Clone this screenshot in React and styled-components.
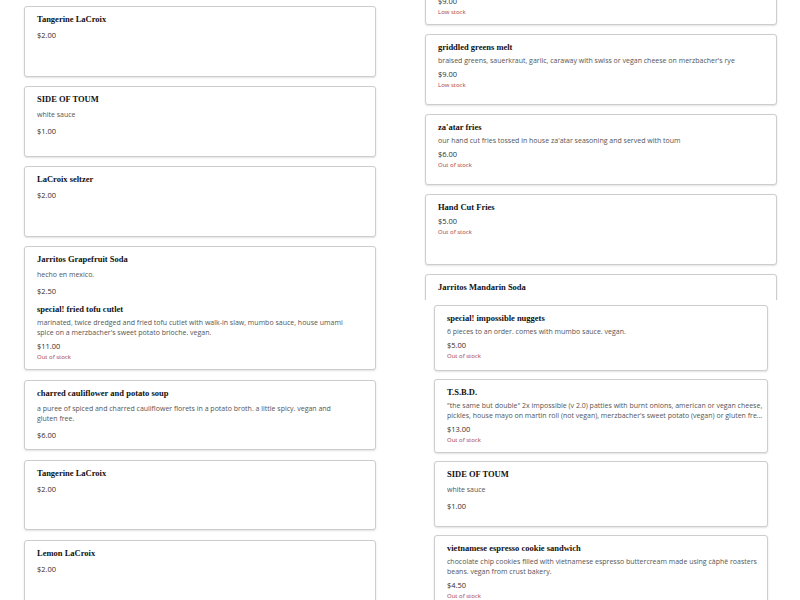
import React from "react";
import styled, { createGlobalStyle } from "styled-components";

const GlobalStyle = createGlobalStyle`
    html, body {
        margin: 0;
        padding: 0;
        background: #ffffff;
    }
    * {
        box-sizing: border-box;
    }
`;

const topLeft = [
    { name: "Tangerine LaCroix", price: "$2.00" },
    { name: "SIDE OF TOUM", desc: "white sauce", price: "$1.00" },
    { name: "LaCroix seltzer", price: "$2.00" },
    { name: "Jarritos Grapefruit Soda", desc: "hecho en mexico.", price: "$2.50" },
];

const topRight = [
    {
        name: "the reuben melt",
        desc: "smoked tofu, sauerkraut, russian dressing with swiss or vegan cheese on merzbacher's rye, served warm with pickles",
        price: "$9.00",
        stock: "Low stock",
    },
    {
        name: "griddled greens melt",
        desc: "braised greens, sauerkraut, garlic, caraway with swiss or vegan cheese on merzbacher's rye",
        price: "$9.00",
        stock: "Low stock",
    },
    {
        name: "za'atar fries",
        desc: "our hand cut fries tossed in house za'atar seasoning and served with toum",
        price: "$6.00",
        stock: "Out of stock",
    },
    { name: "Hand Cut Fries", price: "$5.00", stock: "Out of stock" },
    { name: "Jarritos Mandarin Soda", desc: "hecho en mexico.", price: "$2.50" },
];

const bottomLeft = [
    {
        name: "special! fried tofu cutlet",
        desc: "marinated, twice dredged and fried tofu cutlet with walk-in slaw, mumbo sauce, house umami spice on a merzbacher's sweet potato brioche. vegan.",
        price: "$11.00",
        stock: "Out of stock",
    },
    {
        name: "charred cauliflower and potato soup",
        desc: "a puree of spiced and charred cauliflower florets in a potato broth. a little spicy. vegan and gluten free.",
        price: "$6.00",
    },
    { name: "Tangerine LaCroix", price: "$2.00" },
    { name: "Lemon LaCroix", price: "$2.00" },
];

const bottomRight = [
    {
        name: "special! impossible nuggets",
        desc: "6 pieces to an order. comes with mumbo sauce. vegan.",
        price: "$5.00",
        stock: "Out of stock",
    },
    {
        name: "T.S.B.D.",
        desc: "\"the same but double\" 2x impossible (v 2.0) patties with burnt onions, american or vegan cheese, pickles, house mayo on martin roll (not vegan), merzbacher's sweet potato (vegan) or gluten free bun.",
        price: "$13.00",
        stock: "Out of stock",
    },
    { name: "SIDE OF TOUM", desc: "white sauce", price: "$1.00" },
    {
        name: "vietnamese espresso cookie sandwich",
        desc: "chocolate chip cookies filled with vietnamese espresso buttercream made using càphê roasters beans. vegan from crust bakery.",
        price: "$4.50",
        stock: "Out of stock",
    },
];

const Page = styled.div`
    width: 800px;
    height: 600px;
    overflow: hidden;
    display: flex;
    flex-direction: column;
    background: #ffffff;
`;

const Panel = styled.section`
    height: 300px;
    flex: none;
    overflow: hidden;
    display: grid;
    grid-template-columns: ${p => p.$cols};
    column-gap: ${p => p.$gap}px;
    align-items: start;
    padding-left: 24px;
`;

// columns are scrolled, so each one starts at its own offset
const Column = styled.div`
    display: flex;
    flex-direction: column;
    gap: ${p => p.$gap}px;
    margin-top: ${p => p.$shift}px;
`;

const Card = styled.div`
    background: #ffffff;
    border: 1px solid #cdcdcd;
    border-radius: 3px;
    box-shadow: 0 1px 2px rgba(0, 0, 0, 0.12);
    min-height: ${p => p.$min}px;
    padding: 7px ${p => p.$padRight}px 7px 12px;
    display: flex;
    flex-direction: column;
`;

const Title = styled.div`
    font-family: "Liberation Serif", "Times New Roman", serif;
    font-weight: 700;
    font-size: 8.5px;
    line-height: 11px;
    color: #111111;
    margin-bottom: ${p => (p.$tight ? 3 : 5)}px;
`;

const Desc = styled.div`
    font-family: "Open Sans", "Noto Sans", sans-serif;
    font-size: 7px;
    line-height: 10px;
    color: #555555;
    margin-bottom: ${p => (p.$tight ? 3 : 6)}px;
    display: -webkit-box;
    -webkit-line-clamp: 2;
    -webkit-box-orient: vertical;
    overflow: hidden;
`;

const Price = styled.div`
    font-family: "Open Sans", "Noto Sans", sans-serif;
    font-size: 7.5px;
    line-height: 11px;
    color: #2e2e2e;
`;

const Stock = styled.div`
    font-family: "Open Sans", "Noto Sans", sans-serif;
    font-size: 6px;
    line-height: 10px;
    color: #a63a40;
`;

const MenuCard = ({ item, min, padRight }) => {
    const tight = Boolean(item.stock);
    return (
        <Card $min={min} $padRight={padRight}>
            <Title $tight={tight}>{item.name}</Title>
            {item.desc && <Desc $tight={tight}>{item.desc}</Desc>}
            <Price>{item.price}</Price>
            {item.stock && <Stock>{item.stock}</Stock>}
        </Card>
    );
};

const MenuColumn = ({ items, shift, gap, min, padRight = 12 }) => (
    <Column $shift={shift} $gap={gap}>
        {items.map((item, i) => (
            <MenuCard key={i} item={item} min={min} padRight={padRight} />
        ))}
    </Column>
);

export default function App() {
    return (
        <>
            <GlobalStyle />
            <Page>
                <Panel $cols="352px 352px" $gap={49}>
                    <MenuColumn items={topLeft} shift={6} gap={9} min={71} />
                    <MenuColumn items={topRight} shift={-49} gap={9} min={71} />
                </Panel>
                <Panel $cols="352px 334px" $gap={58}>
                    <MenuColumn items={bottomLeft} shift={-4} gap={10} min={70} padRight={22} />
                    <MenuColumn items={bottomRight} shift={5} gap={8} min={66} padRight={4} />
                </Panel>
            </Page>
        </>
    );
}
